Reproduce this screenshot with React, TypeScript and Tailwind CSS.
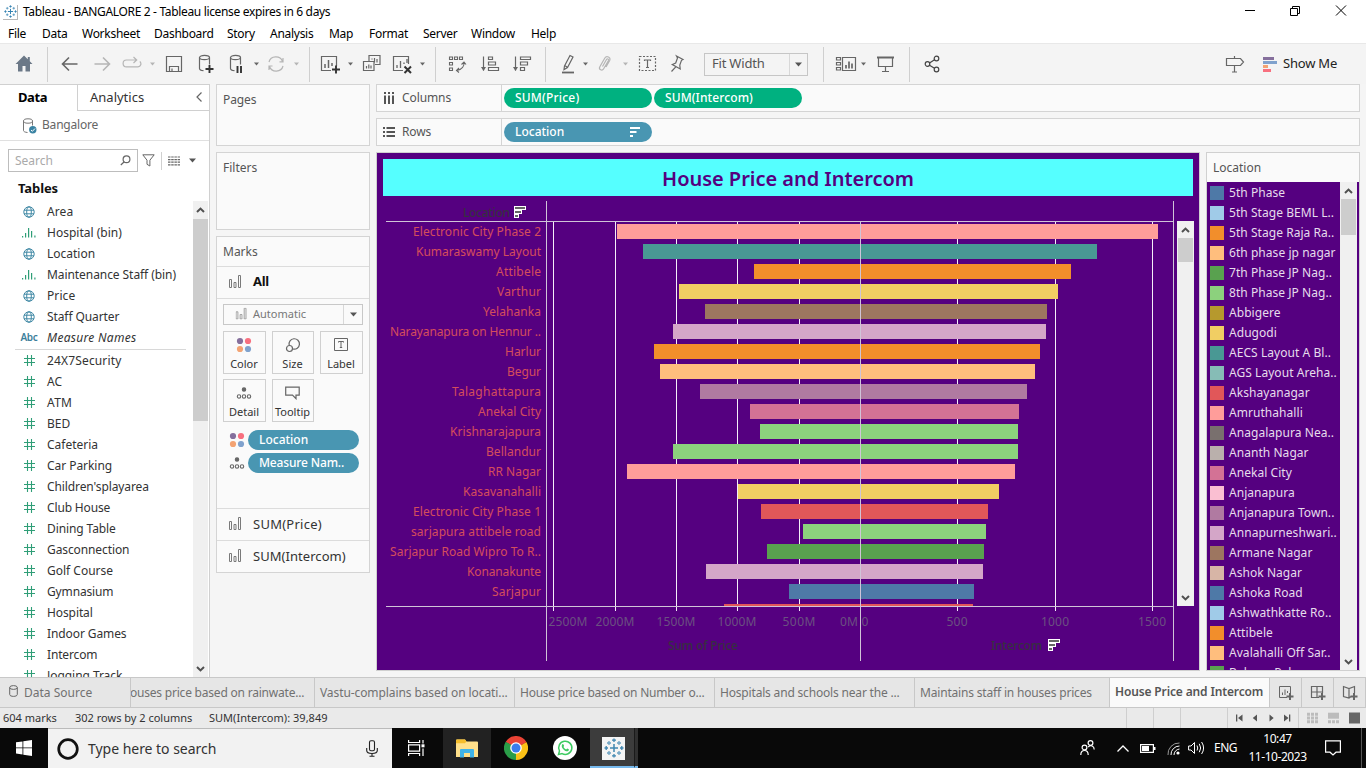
import React from "react";

type Kids = { children?: React.ReactNode };

const TABLEAU = "font-['Noto_Sans','Open_Sans',sans-serif]";

/* ---------- small shared pieces ---------- */

function Ico({ children, w = 20, h = 20, className = "" }: Kids & { w?: number; h?: number; className?: string }) {
  return (
    <svg width={w} height={h} viewBox={`0 0 ${w} ${h}`} fill="none" stroke="#666" strokeWidth="1.2" className={`flex-none ${className}`}>
      {children}
    </svg>
  );
}

function Caret({ className = "", light = false }: { className?: string; light?: boolean }) {
  return (
    <svg width="5" height="4" viewBox="0 0 5 4" className={`flex-none ${className}`}>
      <path d="M0 0.5h5L2.5 3.5z" fill={light ? "#b5b5b5" : "#666"} />
    </svg>
  );
}

function Sep({ className = "" }: { className?: string }) {
  return <div className={`h-[35px] w-px flex-none bg-[#cfcfcf] ${className}`} />;
}

function ScrollArrow({ down = false }: { down?: boolean }) {
  return (
    <svg width="9" height="6" viewBox="0 0 9 6" className={down ? "rotate-180" : ""}>
      <path d="M1 5L4.5 1.6L8 5" fill="none" stroke="#505050" strokeWidth="2" />
    </svg>
  );
}

function BarsGlyph({ light = false }: { light?: boolean }) {
  return (
    <svg width="13" height="13" viewBox="0 0 13 13" fill="none" stroke={light ? "#999" : "#7a7a7a"} className="mb-[2px] flex-none">
      <path d="M.5 4.500h2v8h-2zM5 7.500h2v5H5zM9.500 .5h2v12h-2z" />
    </svg>
  );
}

function ColorDots() {
  return (
    <svg width="16" height="16" viewBox="0 0 16 16" className="flex-none">
      <circle cx="4" cy="4" r="3.100" fill="#856f9c" />
      <circle cx="12" cy="4" r="3.100" fill="#f8707f" />
      <circle cx="4" cy="12" r="3.100" fill="#f3a373" />
      <circle cx="12" cy="12" r="3.100" fill="#80a2cd" />
    </svg>
  );
}

function DetailDots() {
  return (
    <svg width="16" height="14" viewBox="0 0 16 14" fill="none" stroke="#666" strokeWidth="1.1" className="flex-none">
      <circle cx="8" cy="3.500" r="1.700" fill="#666" />
      <circle cx="3" cy="10.500" r="1.700" />
      <circle cx="8" cy="10.500" r="1.700" />
      <circle cx="13" cy="10.500" r="1.700" />
    </svg>
  );
}

function TableauMark({ size, color = "#2f7fb0" }: { size: number; color?: string }) {
  return (
    <svg width={size} height={size} viewBox="0 0 20 20" fill="none" stroke={color} className="flex-none">
      <path d="M10 6v8M6 10h8" strokeWidth="1.500" />
      <path d="M10 .5v3.500M8 2.200h4M10 16v3.500M8 17.800h4M.5 10H4M2.200 8v4M16 10h3.500M17.800 8v4" strokeWidth="1.300" />
      <path d="M5 3v4M3 5h4M15 3v4M13 5h4M5 13v4M3 15h4M15 13v4M13 15h4" strokeWidth="1.300" opacity="0.75" />
    </svg>
  );
}

/* ---------- window chrome ---------- */

function TitleBar() {
  return (
    <div className="flex h-[22px] items-center bg-white">
      <div className="mt-[2px] ml-[3px] flex h-[15px] w-[15px] items-center justify-center border-r border-b border-[#b8b8b8]">
        <TableauMark size={13} />
      </div>
      <span className="mt-[2px] ml-[5px] text-[12px] leading-[18px] tracking-[-0.34px] text-black">Tableau - BANGALORE 2 - Tableau license expires in 6 days</span>
      <svg width="104" height="12" viewBox="0 0 104 12" fill="none" stroke="#000" className="mr-[18px] ml-auto">
        <path d="M1 5.500h10" />
        <path d="M46.500 3.500h7v7h-7zM48.500 3.500v-2h7v7h-2" />
        <path d="M92 .5l10 10M102 .5l-10 10" />
      </svg>
    </div>
  );
}

const menu: [string, string][] = [
  ["File", "w-[34px]"],
  ["Data", "w-[40px]"],
  ["Worksheet", "w-[72px]"],
  ["Dashboard", "w-[73px]"],
  ["Story", "w-[43px]"],
  ["Analysis", "w-[59px]"],
  ["Map", "w-[40px]"],
  ["Format", "w-[54px]"],
  ["Server", "w-[48px]"],
  ["Window", "w-[60px]"],
  ["Help", "w-[40px]"],
];

function MenuBar() {
  return (
    <div className="flex h-[21px] items-center bg-white pt-[2px] pl-[8px] text-[12px] tracking-[-0.28px] text-black">
      {menu.map(([m, w]) => (
        <span key={m} className={`${w} flex-none`}>{m}</span>
      ))}
    </div>
  );
}

function Toolbar() {
  return (
    <div className="flex h-[41px] items-center border-t border-[#e8e8e8] bg-[#f4f4f4]">
      <Ico className="ml-[14px]">
        <path d="M10 1.500L1.500 10H4v7.500h4.500V12h3v5.500H16V10h2.500l-2.700-2.700V3h-2v2.300z" fill="#6b7887" stroke="none" />
      </Ico>
      <Sep className="ml-[13px]" />
      <Ico className="ml-[12px]"><path d="M17.500 10H3M9 3.500L2.500 10L9 16.500" strokeWidth="1.600" /></Ico>
      <Ico className="ml-[12px]"><path d="M2.500 10H17M11 3.500l6.500 6.500l-6.500 6.500" stroke="#b5b5b5" strokeWidth="1.600" /></Ico>
      <Ico className="ml-[10px]"><path d="M14.500 6H4.500a3.300 3.300 0 0 0 0 6.800h11.500a3 3 0 0 0 1.800-5.300M11.500 3l3.200 3l-3.200 3" stroke="#b5b5b5" /></Ico>
      <Caret light className="ml-[8px]" />
      <Ico className="ml-[9px]"><path d="M2.500 2.500h15v15h-15zM5.500 17.500v-5h9v5M8 17v-2.500" /></Ico>
      <Ico className="ml-[12px]">
        <ellipse cx="8.500" cy="3.500" rx="5" ry="2.200" />
        <path d="M3.500 3.500v11c0 1.200 1.500 2 4 2.200M13.500 3.500v7" />
        <path d="M13.500 11v8M9.500 15h8" stroke="#333" strokeWidth="1.900" />
      </Ico>
      <Ico className="ml-[10px]">
        <ellipse cx="9.500" cy="3.500" rx="5" ry="2.200" />
        <path d="M4.500 3.500v11c0 1.200 1.500 2 4 2.200M14.500 3.500v7" />
        <path d="M11.500 12v7M15 12v7" stroke="#333" strokeWidth="1.900" />
      </Ico>
      <Caret className="ml-[8px]" />
      <Ico className="ml-[7px]">
        <path d="M3 8a7 6.500 0 0 1 13.500-.5M17 12a7 6.500 0 0 1-13.500.5M13.500 7.800h3.500V4M6.500 12H3v4" stroke="#b5b5b5" />
      </Ico>
      <Caret light className="ml-[8px]" />
      <Sep className="ml-[10px]" />
      <Ico className="ml-[10px]">
        <path d="M11 16.500H1.500v-14h15V12" />
        <path d="M5 14V10M8.500 14V6M12 12V9" strokeWidth="1.500" />
        <path d="M16 11.500v8M12 15.500h8" stroke="#333" strokeWidth="1.900" />
      </Ico>
      <Caret className="ml-[8px]" />
      <Ico className="ml-[9px]">
        <path d="M7 8V1.500h11v9h-5M1.500 7.500h10.500v9H1.500zM4.500 14.500v-2.500M6.800 14.500v-4M9 14.500v-3M10 5.500V4.500M12.500 8.500V4M15 8.500V5" />
      </Ico>
      <Ico className="ml-[10px]">
        <path d="M11 16.500H1.500v-14h15V10" />
        <path d="M5 14V11M8.500 14V7M12 10V8.500M15 9V5" strokeWidth="1.300" />
        <path d="M12.500 12.500l6.500 6.500M19 12.500L12.500 19" stroke="#333" strokeWidth="2" />
      </Ico>
      <Caret className="ml-[8px]" />
      <Sep className="ml-[10px]" />
      <Ico className="ml-[12px]">
        <path d="M1.500 3h3v2.500h-3zM6.500 3h3v2.500h-3zM11.500 3h3v2.500h-3zM1.500 8.500h3V11h-3zM1.500 14h3v2.500h-3zM16 8c.5 4-2 7.500-7 8.500M13.500 10.500L16 8l2 2.500M11 14l-2.500 2.500L11 18.500" strokeWidth="1.100" />
      </Ico>
      <Ico className="ml-[12px]">
        <path d="M3.500 2.500v14" /><path d="M1 13h5l-2.500 4z" fill="#666" stroke="none" />
        <path d="M8.500 3h4v2.500h-4zM8.500 8h7v3h-7zM8.500 13.500h10v3h-10z" />
      </Ico>
      <Ico className="ml-[12px]">
        <path d="M3.500 2.500v14" /><path d="M1 13h5l-2.500 4z" fill="#666" stroke="none" />
        <path d="M8.500 3h10v2.500h-10zM8.500 8h7v3h-7zM8.500 13.500h4v3h-4z" />
      </Ico>
      <Sep className="ml-[13px]" />
      <Ico className="ml-[12px]">
        <path d="M6.500 12L12 1.500l3 1.500L9.500 13.500L6 15.500zM6.500 11.500l3 1.800" />
        <path d="M4 18.500h12" strokeWidth="1.800" />
      </Ico>
      <Caret className="ml-[5px]" />
      <Ico className="ml-[7px]">
        <path d="M7.500 12.500l4-7c.8-1.400 2.600-.4 2 1l-5 8.500c-1.400 2.300-5 .5-3.800-2l5-8.800c1.800-3 6.500-1 5 2.300L11 13" stroke="#b5b5b5" />
      </Ico>
      <Caret light className="ml-[8px]" />
      <Ico className="ml-[10px]">
        <rect x="1.500" y="2.500" width="16" height="14" strokeDasharray="2 1.500" />
        <path d="M6.500 7V6h6v1M9.500 6v7.500M8 13.500h3" strokeWidth="1.200" />
      </Ico>
      <Ico className="ml-[9px]">
        <path d="M9.500 2l6.500 3.500l-1.500.8L12.800 11l.4 4L5.300 10.500l3.400-1.500L10.500 4zM8.800 12.800L4.500 17.500" />
      </Ico>
      <div className="ml-[17px] flex h-[23px] w-[104px] flex-none items-center border border-[#c6c6c6] text-[13px] text-[#555]">
        <span className="ml-[7px] flex-1 tracking-[-0.2px]">Fit Width</span>
        <div className="flex h-full w-[18px] items-center justify-center border-l border-[#d8d8d8]">
          <svg width="7" height="5" viewBox="0 0 7 5"><path d="M0 .5h7L3.500 4.500z" fill="#555" /></svg>
        </div>
      </div>
      <Sep className="ml-[15px]" />
      <Ico w={22} className="ml-[11px]">
        <path d="M1.500 3.500h4V6h-4zM1.500 8.500h4V11h-4zM1.500 13.500h4V16h-4zM7.500 3.500h13v13h-13z" />
        <path d="M11 14.500v-3.500M14 14.500V7.500M17 14.500V9.500" strokeWidth="1.700" />
      </Ico>
      <Caret className="ml-[4px]" />
      <Ico className="ml-[10px]"><path d="M2.500 3.500v9h14v-9M9.500 12.500v5M6 17.500h7" /><path d="M1 3.500h17" strokeWidth="2" /></Ico>
      <Sep className="ml-[13px]" />
      <Ico className="ml-[12px]">
        <g stroke="#444">
          <circle cx="5.500" cy="10" r="2.300" /><circle cx="14.500" cy="4.500" r="2.300" /><circle cx="14.500" cy="15.500" r="2.300" />
          <path d="M7.500 9L12.500 5.800M7.500 11.200l5 3" />
        </g>
      </Ico>
      <Ico className="mr-[18px] ml-auto"><path d="M1.500 4.500h14l3 3.500l-3 3.500h-14zM9.500 2v2.500M9.500 11.500v6.500M7 18h5" /></Ico>
      <svg width="14" height="15" viewBox="0 0 14 15" className="flex-none">
        <path d="M0 0h11v3H0z" fill="#856f9c" /><path d="M0 4h14v3H0z" fill="#80a2cd" />
        <path d="M0 8h5v3H0z" fill="#f3a373" /><path d="M0 12h8v3H0z" fill="#f8707f" />
      </svg>
      <span className="ml-[6px] w-[83px] flex-none text-[13px] tracking-[-0.2px] text-[#222]">Show Me</span>
    </div>
  );
}

/* ---------- data pane ---------- */

function FieldIcon({ kind }: { kind: string }) {
  if (kind === "geo")
    return (
      <svg width="12" height="12" viewBox="0 0 12 12" fill="none" stroke="#4189a5">
        <circle cx="6" cy="6" r="5.200" /><ellipse cx="6" cy="6" rx="2.300" ry="5.200" /><path d="M1 4.200h10M1 7.800h10" />
      </svg>
    );
  if (kind === "bin")
    return (
      <svg width="14" height="11" viewBox="0 0 14 11" fill="none" stroke="#2f9e77" strokeWidth="1.200">
        <path d="M.6 9v1.500M3.600 6v4.500M6.600 1v9.500M9.600 4v6.500M12.900 8.500v2" />
      </svg>
    );
  if (kind === "abc") return <span className="text-[10px] font-semibold tracking-[-0.3px] text-[#3d7f9b]">Abc</span>;
  return (
    <svg width="11" height="11" viewBox="0 0 11 11" fill="none" stroke="#2f9e77" strokeWidth="1.100">
      <path d="M3.500 0v11M7.500 0v11M0 3.500h11M0 7.500h11" />
    </svg>
  );
}

const dims: [string, string, string][] = [
  ["geo", "Area", "tracking-[0.1px]"],
  ["bin", "Hospital (bin)", "tracking-[0px]"],
  ["geo", "Location", "tracking-[0px]"],
  ["bin", "Maintenance Staff (bin)", "tracking-[-0.07px]"],
  ["geo", "Price", "tracking-[0.1px]"],
  ["geo", "Staff Quarter", "tracking-[-0.1px]"],
  ["abc", "Measure Names", "tracking-[0.3px]"],
];
const measures: [string, string][] = [
  ["24X7Security", "tracking-[0.15px]"],
  ["AC", "tracking-[0px]"],
  ["ATM", "tracking-[0.3px]"],
  ["BED", "tracking-[0px]"],
  ["Cafeteria", "tracking-[0px]"],
  ["Car Parking", "tracking-[-0.05px]"],
  ["Children'splayarea", "tracking-[-0.1px]"],
  ["Club House", "tracking-[-0.15px]"],
  ["Dining Table", "tracking-[-0.1px]"],
  ["Gasconnection", "tracking-[-0.1px]"],
  ["Golf Course", "tracking-[0px]"],
  ["Gymnasium", "tracking-[-0.15px]"],
  ["Hospital", "tracking-[-0.1px]"],
  ["Indoor Games", "tracking-[-0.1px]"],
  ["Intercom", "tracking-[-0.15px]"],
  ["Jogging Track", "tracking-[-0.05px]"],
];

function Field({ kind, name, track }: { kind: string; name: string; track: string }) {
  return (
    <div className="flex h-[21px] flex-none items-center">
      <div className="flex w-[58px] justify-center">
        <FieldIcon kind={kind} />
      </div>
      <span className={`-ml-[11px] text-[12px] text-[#333] ${track} ${kind === "abc" ? "italic" : ""}`}>{name}</span>
    </div>
  );
}

function DataPane() {
  return (
    <div className="flex w-[210px] flex-none flex-col border-t border-r border-[#d0d0d0] bg-white">
      <div className="flex h-[26px] flex-none">
        <div className="w-[77px] pl-[18px] text-[13px] leading-[25px] font-bold tracking-[-0.4px] text-black">Data</div>
        <div className="flex flex-1 items-center border-b border-l border-[#d0d0d0] pl-[12px] text-[13px] text-[#333]">
          <span className="flex-1 leading-[23px]">Analytics</span>
          <svg width="6" height="10" viewBox="0 0 6 10" className="mr-[7px] mb-[2px]"><path d="M5.500 .5L1 5l4.500 4.500" fill="none" stroke="#666" strokeWidth="1.200" /></svg>
        </div>
      </div>
      <div className="flex h-[30px] flex-none items-center border-b border-[#e0e0e0] pl-[23px]">
        <svg width="14" height="16" viewBox="0 0 14 16" fill="none" stroke="#777">
          <ellipse cx="5" cy="3" rx="4.500" ry="2.200" /><path d="M.5 3v9.500c0 1 1.500 1.800 4 2M9.500 3v4.500" />
          <circle cx="9.800" cy="11.800" r="3.700" fill="#3a83a3" stroke="none" /><path d="M8 12l1.400 1.300L12 10.500" stroke="#fff" />
        </svg>
        <span className="mb-[1px] ml-[5px] text-[12px] tracking-[-0.2px] text-[#666]">Bangalore</span>
      </div>
      <div className="flex h-[39px] flex-none items-center pl-[8px]">
        <div className="flex h-[23px] w-[130px] items-center border border-[#bdbdbd] pl-[6px]">
          <span className="flex-1 text-[12px] text-[#aaa]">Search</span>
          <svg width="11" height="11" viewBox="0 0 11 11" fill="none" stroke="#666" strokeWidth="1.200" className="mr-[6px]"><circle cx="6.500" cy="4.300" r="3.400" /><path d="M4 7L.8 10" /></svg>
        </div>
        <svg width="13" height="13" viewBox="0 0 13 13" fill="none" stroke="#666" className="ml-[4px]"><path d="M.8 .8h11.400L7.900 6.200v5.800L5 10.300V6.200z" /></svg>
        <div className="ml-[6px] h-[18px] w-px bg-[#d0d0d0]" />
        <svg width="12" height="10" viewBox="0 0 12 10" stroke="#666" strokeWidth="1.200" className="ml-[6px]"><path d="M0 1h12M0 3.600h12M0 6.200h12M0 8.800h12" strokeDasharray="2.500 .7" /></svg>
        <svg width="7" height="5" viewBox="0 0 7 5" className="ml-[9px]"><path d="M0 .5h7L3.500 4.500z" fill="#555" /></svg>
      </div>
      <div className="h-[20px] flex-none pl-[18px] text-[13px] leading-[16px] font-bold tracking-[-0.1px] text-[#111]">Tables</div>
      <div className="mt-[1px] flex min-h-0 flex-1">
        <div className="flex flex-1 flex-col overflow-hidden">
          {dims.map(([k, n, t]) => <Field key={n} kind={k} name={n} track={t} />)}
          <div className="mt-[1px] mr-[7px] ml-[15px] h-px flex-none bg-[#d8d8d8]" />
          {measures.map(([n, t]) => <Field key={n} kind="num" name={n} track={t} />)}
        </div>
        <div className="mr-[1px] flex w-[15px] flex-col items-center bg-[#f0f0f0]">
          <div className="flex h-[18px] items-center"><ScrollArrow /></div>
          <div className="h-[202px] w-full bg-[#cdcdcd]" />
          <div className="mt-auto flex h-[17px] items-center"><ScrollArrow down /></div>
        </div>
      </div>
    </div>
  );
}

/* ---------- cards column ---------- */

function MarkButton({ label, children }: Kids & { label: string }) {
  return (
    <div className="flex h-[43px] flex-col items-center justify-between border border-[#d0d0d0] pt-[4px] pr-[1px]">
      <div className="flex h-[17px] items-center">{children}</div>
      <span className="text-[11px] leading-[18px] whitespace-nowrap text-[#333]">{label}</span>
    </div>
  );
}

function Cards() {
  const card = "border border-[#d4d4d4] bg-[#fafafa] text-[#555]";
  return (
    <div className="ml-[6px] flex w-[154px] flex-none flex-col gap-[6px] text-[12px]">
      <div className={`${card} h-[62px] flex-none pt-[6px] pl-[6px] leading-[18px] tracking-[-0.1px]`}>Pages</div>
      <div className={`${card} h-[78px] flex-none pt-[6px] pl-[6px] leading-[18px]`}>Filters</div>
      <div className={`${card} flex h-[337px] flex-none flex-col`}>
        <div className="h-[30px] flex-none border-b border-[#dcdcdc] pl-[6px] leading-[29px]">Marks</div>
        <div className="flex h-[32px] flex-none items-center border-b border-[#dcdcdc] pl-[12px]">
          <BarsGlyph />
          <span className="mb-[2px] ml-[11px] text-[13px] font-bold tracking-[-0.3px] text-[#111]">All</span>
        </div>
        <div className="flex h-[210px] flex-none flex-col border-b border-[#dcdcdc] px-[6px] pt-[5px]">
          <div className="flex h-[21px] flex-none items-center border border-[#c8c8c8]">
            <div className="ml-[11px] scale-90"><BarsGlyph light /></div>
            <span className="ml-[5px] flex-1 text-[11px] text-[#777]">Automatic</span>
            <div className="flex h-full w-[19px] items-center justify-center border-l border-[#d8d8d8]">
              <svg width="7" height="5" viewBox="0 0 7 5"><path d="M0 .5h7L3.500 4.500z" fill="#555" /></svg>
            </div>
          </div>
          <div className="mt-[6px] grid grid-cols-[43px_42px_43px] gap-x-[6px] gap-y-[5px]">
            <MarkButton label="Color"><ColorDots /></MarkButton>
            <MarkButton label="Size">
              <svg width="16" height="16" viewBox="0 0 16 16" fill="none" stroke="#666" strokeWidth="1.200"><path d="M4.200 8.200A5.200 5.200 0 1 1 8 12" /><circle cx="4.500" cy="11.500" r="3" /></svg>
            </MarkButton>
            <MarkButton label="Label">
              <svg width="14" height="13" viewBox="0 0 14 13" fill="none" stroke="#666"><path d="M.5 .5h13v12H.5z" /><path d="M4.500 4.500v-1h5v1M7 3.500v6M5.800 9.500h2.400" /></svg>
            </MarkButton>
            <MarkButton label="Detail"><DetailDots /></MarkButton>
            <MarkButton label="Tooltip">
              <svg width="15" height="14" viewBox="0 0 15 14" fill="none" stroke="#666" strokeWidth="1.200"><path d="M.7 1.200h13.500v8H11v3.500L7.500 9.200H.7z" /></svg>
            </MarkButton>
          </div>
          <div className="mt-[8px] flex items-center gap-[3px] pl-[6px]">
            <ColorDots />
            <span className="h-[20px] w-[111px] rounded-full bg-[#4996b2] pl-[11px] leading-[19px] font-medium text-white">Location</span>
          </div>
          <div className="mt-[3px] flex items-center gap-[3px] pl-[6px]">
            <DetailDots />
            <span className="h-[20px] w-[111px] rounded-full bg-[#4996b2] pl-[11px] leading-[19px] font-medium tracking-[-0.15px] whitespace-nowrap text-white">Measure Nam..</span>
          </div>
        </div>
        <div className="flex h-[32px] flex-none items-center border-b border-[#dcdcdc] pl-[12px]">
          <BarsGlyph /><span className="ml-[11px] text-[13px] tracking-[0.25px] text-[#333]">SUM(Price)</span>
        </div>
        <div className="flex flex-1 items-center pl-[12px]">
          <BarsGlyph /><span className="ml-[11px] text-[13px] tracking-[0.05px] text-[#333]">SUM(Intercom)</span>
        </div>
      </div>
    </div>
  );
}

/* ---------- shelves ---------- */

function Shelf({ label, icon, children }: Kids & { label: string; icon: React.ReactNode }) {
  return (
    <div className="flex h-[28px] flex-none border border-[#d4d4d4] bg-[#fafafa] text-[12px]">
      <div className="flex w-[125px] items-center border-r border-[#d4d4d4] pl-[6px] text-[#555]">
        {icon}
        <span className="ml-[7px] tracking-[-0.1px]">{label}</span>
      </div>
      <div className="flex items-center gap-[2px] pl-[2px]">{children}</div>
    </div>
  );
}

/* ---------- chart ---------- */

type Row = [string, number, number, string, number];
const rows: Row[] = [
  ["Electronic City Phase 2", 617, 1158, "#ff9d9a", 128],
  ["Kumaraswamy Layout", 643, 1097, "#499894", 125],
  ["Attibele", 754, 1071, "#f28e2b", 45],
  ["Varthur", 679, 1058, "#f1ce63", 44],
  ["Yelahanka", 705, 1047, "#9d7660", 58],
  ["Narayanapura on Hennur ..", 673, 1046, "#d4a6c8", 151],
  ["Harlur", 654, 1040, "#f28e2b", 36],
  ["Begur", 660, 1035, "#ffbe7d", 34],
  ["Talaghattapura", 700, 1027, "#b07aa1", 89],
  ["Anekal City", 750, 1019, "#d37295", 63],
  ["Krishnarajapura", 760, 1018, "#8cd17d", 91],
  ["Bellandur", 673, 1018, "#8cd17d", 55],
  ["RR Nagar", 627, 1015, "#ff9d9a", 53],
  ["Kasavanahalli", 738, 999, "#f1ce63", 78],
  ["Electronic City Phase 1", 761, 988, "#e15759", 128],
  ["sarjapura attibele road", 803, 986, "#8cd17d", 130],
  ["Sarjapur Road Wipro To R..", 767, 984, "#59a14f", 151],
  ["Konanakunte", 706, 983, "#d4a6c8", 74],
  ["Sarjapur", 789, 974, "#4e79a7", 49],
];

const ticks: [string, number, number][] = [
  ["2500M", 568, 39], ["2000M", 615, 39], ["1500M", 676, 39], ["1000M", 737, 39], ["500M", 799, 33],
  ["0M", 849, 18], ["0", 865, 7], ["500", 957, 21], ["1000", 1055, 28], ["1500", 1152, 28],
];
const grid = [553, 615, 676, 737, 799, 957, 1055, 1152];

function SortGlyph({ x, y }: { x: number; y: number }) {
  return (
    <g transform={`translate(${x} ${y})`}>
      <path d="M0 0h12v4H8v4H5v4H0z" fill="#fff" />
      <path d="M1 1h10v2H1zM1 5h6v2H1zM1 9h3v2H1z" fill="#666" />
    </g>
  );
}

function Chart() {
  return (
    <svg width="794" height="462" viewBox="383 200 794 462" className="flex-none" shapeRendering="crispEdges">
      {grid.map((x) => <path key={x} d={`M${x + 0.5} 221V611`} stroke="#f4eef8" />)}
      {rows.map(([n, a, b, c], i) => <rect key={n} x={a} y={224 + i * 20} width={b - a} height="15" fill={c} />)}
      <rect x="724" y="604" width="249" height="2" fill="#e15759" />
      <path d="M546.500 201V661M860.500 221V661M1173.500 201V661M386 221.500H1174M386 606.500H1174" stroke="#d0c4d8" />
      <g fontSize="12" fill="#e15759" textAnchor="end">
        {rows.map(([n, , , , w], i) => (
          <text key={n} x="541" y={236 + i * 20} textLength={w} opacity="0.9">{n}</text>
        ))}
      </g>
      <g fontSize="12" fill="#6b5180" textAnchor="middle">
        {ticks.map(([t, x, w]) => <text key={t} x={x} y="626" textLength={w}>{t}</text>)}
      </g>
      <g fontSize="12" fill="#36303f" fontWeight="500">
        <text x="463" y="217" textLength="47">Location</text>
        <text x="668" y="650" textLength="70">Sum of Price</text>
        <text x="991" y="650" textLength="51">Intercom</text>
      </g>
      <SortGlyph x={514} y={206} />
      <SortGlyph x={1048} y={639} />
    </svg>
  );
}

function View() {
  return (
    <div className="flex w-[824px] flex-none flex-col border border-[#d0d0d0] bg-[#550080] pt-[6px] pl-[6px]">
      <div className="flex h-[37px] w-[810px] flex-none items-center justify-center bg-[#55ffff] pt-[2px] text-[20px] font-semibold tracking-[-0.03px] text-[#550080]">
        House Price and Intercom
      </div>
      <div className="flex pt-[4px]">
        <Chart />
        <div className="mt-[21px] flex h-[385px] w-[17px] flex-col items-center bg-[#f0f0f0]">
          <div className="flex h-[17px] items-center"><ScrollArrow /></div>
          <div className="h-[24px] w-[15px] bg-[#cdcdcd]" />
          <div className="mt-auto flex h-[17px] items-center"><ScrollArrow down /></div>
        </div>
      </div>
    </div>
  );
}

/* ---------- legend ---------- */

const legend: [string, string][] = [
  ["5th Phase", "bg-[#4e79a7]"],
  ["5th Stage BEML L..", "bg-[#a0cbe8]"],
  ["5th Stage Raja Ra..", "bg-[#f28e2b]"],
  ["6th phase jp nagar", "bg-[#ffbe7d]"],
  ["7th Phase JP Nag..", "bg-[#59a14f]"],
  ["8th Phase JP Nag..", "bg-[#8cd17d]"],
  ["Abbigere", "bg-[#b6992d]"],
  ["Adugodi", "bg-[#f1ce63]"],
  ["AECS Layout A Bl..", "bg-[#499894]"],
  ["AGS Layout Areha..", "bg-[#86bcb6]"],
  ["Akshayanagar", "bg-[#e15759]"],
  ["Amruthahalli", "bg-[#ff9d9a]"],
  ["Anagalapura Nea..", "bg-[#79706e]"],
  ["Ananth Nagar", "bg-[#bab0ac]"],
  ["Anekal City", "bg-[#d37295]"],
  ["Anjanapura", "bg-[#fabfd2]"],
  ["Anjanapura Town..", "bg-[#b07aa1]"],
  ["Annapurneshwari..", "bg-[#d4a6c8]"],
  ["Armane Nagar", "bg-[#9d7660]"],
  ["Ashok Nagar", "bg-[#d7b5a6]"],
  ["Ashoka Road", "bg-[#4e79a7]"],
  ["Ashwathkatte Ro..", "bg-[#a0cbe8]"],
  ["Attibele", "bg-[#f28e2b]"],
  ["Avalahalli Off Sar..", "bg-[#ffbe7d]"],
  ["Babusa Palya", "bg-[#59a14f]"],
];

function Legend() {
  return (
    <div className="ml-[6px] flex w-[154px] flex-none flex-col border border-[#d0d0d0] bg-[#fafafa] text-[12px]">
      <div className="h-[29px] flex-none pl-[6px] leading-[29px] text-[#555]">Location</div>
      <div className="flex min-h-0 flex-1 bg-[#550080]">
        <div className="flex w-[133px] flex-none flex-col overflow-hidden pt-[1px]">
          {legend.map(([n, c]) => (
            <div key={n} className="flex h-[20px] flex-none items-center pl-[3px]">
              <span className={`h-[14px] w-[14px] ${c}`} />
              <span className="ml-[5px] flex-none tracking-[0.05px] whitespace-nowrap text-[#e6dcec]">{n}</span>
            </div>
          ))}
        </div>
        <div className="flex w-[17px] flex-col items-center bg-[#f0f0f0]">
          <div className="flex h-[17px] items-center"><ScrollArrow /></div>
          <div className="h-[36px] w-[15px] bg-[#cdcdcd]" />
          <div className="mt-auto flex h-[17px] items-center"><ScrollArrow down /></div>
        </div>
      </div>
    </div>
  );
}

/* ---------- bottom ---------- */

function SheetTabs() {
  const tab = "flex-none overflow-hidden border-r border-[#c8c8c8] whitespace-nowrap";
  return (
    <div className="flex h-[31px] flex-none border-t border-b border-[#c8c8c8] bg-[#e6e6e6] text-[12px] leading-[30px] text-[#717171]">
      <div className={`${tab} flex w-[131px] items-center pl-[9px]`}>
        <svg width="9" height="12" viewBox="0 0 9 12" fill="none" stroke="#666" className="mb-[3px]"><ellipse cx="4.500" cy="2.500" rx="3.800" ry="1.900" /><path d="M.7 2.500v7c0 2.500 7.600 2.500 7.600 0v-7" /></svg>
        <span className="ml-[6px]">Data Source</span>
      </div>
      <div className={`${tab} w-[184px] tracking-[-0.21px]`}><span className="-ml-[1px]">ouses price based on rainwate...</span></div>
      <div className={`${tab} w-[200px] pl-[5px] tracking-[-0.09px]`}>Vastu-complains based on locati...</div>
      <div className={`${tab} w-[200px] pl-[5px] tracking-[-0.24px]`}>House price based on Number o...</div>
      <div className={`${tab} w-[200px] pl-[5px] tracking-[-0.18px]`}>Hospitals and schools near the ...</div>
      <div className={`${tab} w-[195px] pl-[5px] tracking-[-0.18px]`}>Maintains staff in houses prices</div>
      <div className={`${tab} w-[160px] bg-[#fafafa] pl-[5px] leading-[28px] font-semibold tracking-[-0.14px] text-[#555]`}>House Price and Intercom</div>
      <div className={`${tab} flex w-[32px] items-center justify-center`}>
        <Ico w={16} h={16}><path d="M9 12.500H1.500v-11h11V8M4.500 10V7.500M7 10V4.500M9.500 8V6" strokeWidth="1" /><path d="M12 8v7M8.500 11.500h7" strokeWidth="2" /></Ico>
      </div>
      <div className={`${tab} flex w-[32px] items-center justify-center`}>
        <Ico w={16} h={16}><path d="M9 12.500H1.500v-11h11V8M1.500 7h11M7 1.500v11" /><path d="M12 8v7M8.500 11.500h7" strokeWidth="2" /></Ico>
      </div>
      <div className={`${tab} flex w-[32px] items-center justify-center`}>
        <Ico w={16} h={16}><path d="M9 11.500L7 13L1.500 11.500v-10L7 3.500l5.500-2V8M7 3.500V13" /><path d="M12 8v7M8.500 11.500h7" strokeWidth="2" /></Ico>
      </div>
    </div>
  );
}

function StatusBar() {
  const v = "h-full flex-none border-l border-[#cfcfcf]";
  return (
    <div className="flex h-[20px] flex-none items-center bg-[#eaeaea] pl-[3px] text-[11px] text-[#333]">
      <span className="w-[72px]">604 marks</span>
      <span className="w-[134px]">302 rows by 2 columns</span>
      <span className="tracking-[0.02px]">SUM(Intercom): 39,849</span>
      <div className={`${v} ml-auto w-[27px]`} />
      <div className={`${v} w-[27px]`} />
      <div className={`${v} w-[47px]`} />
      <div className={`${v} flex w-[71px] items-center pl-[8px]`}>
        <svg width="56" height="8" viewBox="0 0 56 8" fill="#555"><path d="M0 .5h1.300v7H0zM6.500 .5v7L2 4zM21 .5v7L16.800 4zM33.500 .5v7L37.700 4zM48 .5v7L52.500 4zM53 .5h1.300v7H53z" /></svg>
      </div>
      <div className={`${v} flex w-[68px] items-center pl-[8px]`}>
        <svg width="54" height="12" viewBox="0 0 54 12">
          <path d="M0 2.200h11M0 6h11M0 9.800h11" stroke="#bcbcbc" strokeWidth="3" strokeDasharray="3 1" />
          <path d="M21 .7h11v6H21z" fill="#bcbcbc" /><path d="M21 9.800h11" stroke="#bcbcbc" strokeWidth="3" strokeDasharray="3 1" />
          <path d="M42 .5h11v11H42z" fill="#666" />
        </svg>
      </div>
    </div>
  );
}

function Taskbar() {
  return (
    <div className="flex h-[40px] flex-none items-center bg-[#090909] text-white">
      <div className="flex w-[48px] flex-none justify-center">
        <svg width="16" height="16" viewBox="0 0 16 16" fill="#fff"><path d="M0 2.300L6.500 1.400v6.100H0zM7.300 1.300L16 0v7.500H7.300zM0 8.300h6.500v6.200L0 13.600zM7.300 8.300H16V16l-8.700-1.300z" /></svg>
      </div>
      <div className="flex h-full w-[344px] flex-none items-center border-t border-[#bbb] bg-[#f2f2f2] pl-[9px]">
        <svg width="22" height="22" viewBox="0 0 22 22"><circle cx="11" cy="11" r="9.300" fill="none" stroke="#111" strokeWidth="2.700" /></svg>
        <span className="ml-[9px] text-[14px] tracking-[-0.03px] text-[#333]">Type here to search</span>
        <svg width="12" height="17" viewBox="0 0 12 17" fill="none" stroke="#222" strokeWidth="1.100" className="mr-[14px] ml-auto"><rect x="3.500" y=".7" width="5" height="10" rx="1.500" /><path d="M.7 8v2.500c0 4 10.600 4 10.600 0V8M6 13.500V16M3.500 16.200h5" /></svg>
      </div>
      <div className="flex h-full w-[51px] flex-none items-center justify-center pr-[2px]">
        <svg width="17" height="16" viewBox="0 0 17 16" fill="none" stroke="#fff" strokeWidth="1.200"><path d="M.6 0v2.500h11V0M.6 16v-2.500h11V16M.6 4.800h11v6.300H.6zM15 0v3.500M15 8.500V16" /><path d="M13.500 4.300h3v3h-3z" fill="#fff" stroke="none" /></svg>
      </div>
      <div className="flex h-full w-[48px] flex-none items-center justify-center bg-[#222]">
        <svg width="22" height="19" viewBox="0 0 22 19"><path d="M0 1.500Q0 .5 1 .5h8l1.500 2H21q1 0 1 1V18H0z" fill="#ffe08a" /><path d="M0 1.500Q0 .5 1 .5h8l1.500 2L9 4.200H0z" fill="#f5bd2c" /><path d="M4 18.500V11q0-1 1-1h12q1 0 1 1v7.500h-4V14H8v4.500z" fill="#3fb3e8" /></svg>
      </div>
      <div className="flex w-[49px] flex-none justify-center">
        <svg width="24" height="24" viewBox="0 0 24 24">
          <path d="M12 12L1.600 6A12 12 0 0 1 22.400 6z" fill="#ea4335" />
          <path d="M12 12L22.400 6A12 12 0 0 1 12 24z" fill="#fbc116" />
          <path d="M12 12V18L12 24A12 12 0 0 1 1.600 6z" fill="#2a9d48" />
          <path d="M12 6h10.400L17.200 9z" fill="#ea4335" /><path d="M17.200 15L12 24V17z" fill="#fbc116" /><path d="M6.800 15L1.600 6L8 9z" fill="#2a9d48" />
          <circle cx="12" cy="12" r="5.800" fill="#fff" /><circle cx="12" cy="12" r="4.500" fill="#3b7ded" />
        </svg>
      </div>
      <div className="flex w-[49px] flex-none justify-center">
        <svg width="24" height="24" viewBox="0 0 24 24">
          <circle cx="12" cy="12" r="12" fill="#fff" />
          <path d="M5.500 18.500l1-3.500a6.600 6.600 0 1 1 2.600 2.600z" fill="none" stroke="#3ecb62" strokeWidth="1.500" />
          <path d="M9.200 8.400c.5-.6 1.100-.5 1.300.1l.6 1.300c.1.400-.6 1-.6 1.200.6 1.100 1.500 1.900 2.600 2.400.3.100.8-.9 1.200-.8l1.400.7c.5.300.1 1.300-.5 1.700-1.100.7-2.900.1-4.400-1.300-1.700-1.500-2.800-3.800-1.600-5.300z" fill="#3ecb62" />
        </svg>
      </div>
      <div className="ml-[1px] flex h-full w-[44px] flex-none items-center justify-center border-b-2 border-[#76b9ed] bg-[#3c3c3c] pt-[2px] pl-[3px]">
        <div className="flex h-[23px] w-[23px] items-center justify-center bg-[#f4f4f4]"><TableauMark size={20} color="#3f86b0" /></div>
      </div>
      <div className="h-full w-[4px] flex-none border-b-2 border-l border-[#76b9ed] border-l-[#1a1a1a] bg-[#303030]" />
      <div className="ml-auto flex items-center">
        <svg width="15" height="16" viewBox="0 0 15 16" fill="none" stroke="#fff" strokeWidth="1.200"><circle cx="4.500" cy="7.500" r="2.400" /><path d="M.8 15c0-6 7.400-6 7.400 0" /><circle cx="10.500" cy="3" r="2.400" /><path d="M8.200 7c2.500-2.500 6-1 6 2.500" /></svg>
        <svg width="12" height="7" viewBox="0 0 12 7" fill="none" stroke="#fff" strokeWidth="1.300" className="ml-[22px]"><path d="M.5 6.500L6 1l5.500 5.500" /></svg>
        <svg width="16" height="9" viewBox="0 0 16 9" className="ml-[11px]"><path d="M.6 .6h12.800v7.800H.6z" fill="none" stroke="#fff" strokeWidth="1.200" /><path d="M2 2h7v5H2zM14 3h1.500v3H14z" fill="#fff" /></svg>
        <svg width="14" height="13" viewBox="0 0 14 13" fill="none" className="ml-[10px]"><path d="M2 13A11 11 0 0 1 13.500 1" stroke="#999" /><path d="M5 13A8.500 8.500 0 0 1 13.500 4M8 13A6 6 0 0 1 13.500 7" stroke="#fff" /><circle cx="12" cy="11" r="1.600" fill="#fff" /></svg>
        <svg width="17" height="14" viewBox="0 0 17 14" fill="none" stroke="#fff" className="ml-[8px]"><path d="M.6 5h2.400L6.500 1.500v11L3 9H.6zM9 4.500q1.500 2.500 0 5M11.300 2.800q2.800 4.200 0 8.400M13.600 1q4 6 0 12" /></svg>
        <span className="ml-[9px] text-[12px] tracking-[-0.5px]">ENG</span>
        <div className="ml-[11px] w-[59px] text-center text-[12px] leading-[18px] tracking-[-0.45px] whitespace-nowrap">
          <div>10:47</div>
          <div>11-10-2023</div>
        </div>
        <svg width="16" height="16" viewBox="0 0 16 16" fill="none" stroke="#fff" strokeWidth="1.200" className="ml-[18px]"><path d="M.6 .8h14.800v11.400h-4.400L8 15L5 12.200H.6z" /></svg>
        <div className="mr-[4px] ml-[20px] h-[40px] w-px bg-[#555]" />
      </div>
    </div>
  );
}

export default function App() {
  return (
    <div className={`flex h-[768px] w-[1366px] flex-col overflow-hidden bg-[#f5f5f5] ${TABLEAU}`}>
      <TitleBar />
      <MenuBar />
      <Toolbar />
      <div className="flex h-[593px] flex-none">
        <DataPane />
        <Cards />
        <div className="ml-[6px] flex h-[587px] w-[984px] flex-none flex-col gap-[6px]">
          <Shelf label="Columns" icon={<svg width="12" height="12" viewBox="0 0 12 12" stroke="#555" strokeWidth="2"><path d="M2 0v2M6 0v2M10 0v2M2 3.500V12M6 3.500V12M10 3.500V12" /></svg>}>
            <span className="h-[20px] w-[148px] rounded-full bg-[#00b180] pl-[11px] leading-[19px] font-medium tracking-[0.2px] text-white">SUM(Price)</span>
            <span className="h-[20px] w-[148px] rounded-full bg-[#00b180] pl-[11px] leading-[19px] font-medium tracking-[0.1px] text-white">SUM(Intercom)</span>
          </Shelf>
          <Shelf label="Rows" icon={<svg width="12" height="12" viewBox="0 0 12 12" stroke="#555" strokeWidth="2"><path d="M0 2h2M0 6h2M0 10h2M3.500 2H12M3.500 6H12M3.500 10H12" /></svg>}>
            <span className="flex h-[20px] w-[148px] items-center rounded-full bg-[#4996b2] pr-[12px] pl-[11px] leading-[19px] font-medium text-white">
              <span className="mb-[1px] flex-1">Location</span>
              <svg width="10" height="10" viewBox="0 0 10 10" stroke="#fff" strokeWidth="2"><path d="M0 1h10M0 5h6.500M0 9h3" /></svg>
            </span>
          </Shelf>
          <div className="flex min-h-0 flex-1">
            <View />
            <Legend />
          </div>
        </div>
      </div>
      <SheetTabs />
      <StatusBar />
      <Taskbar />
    </div>
  );
}
